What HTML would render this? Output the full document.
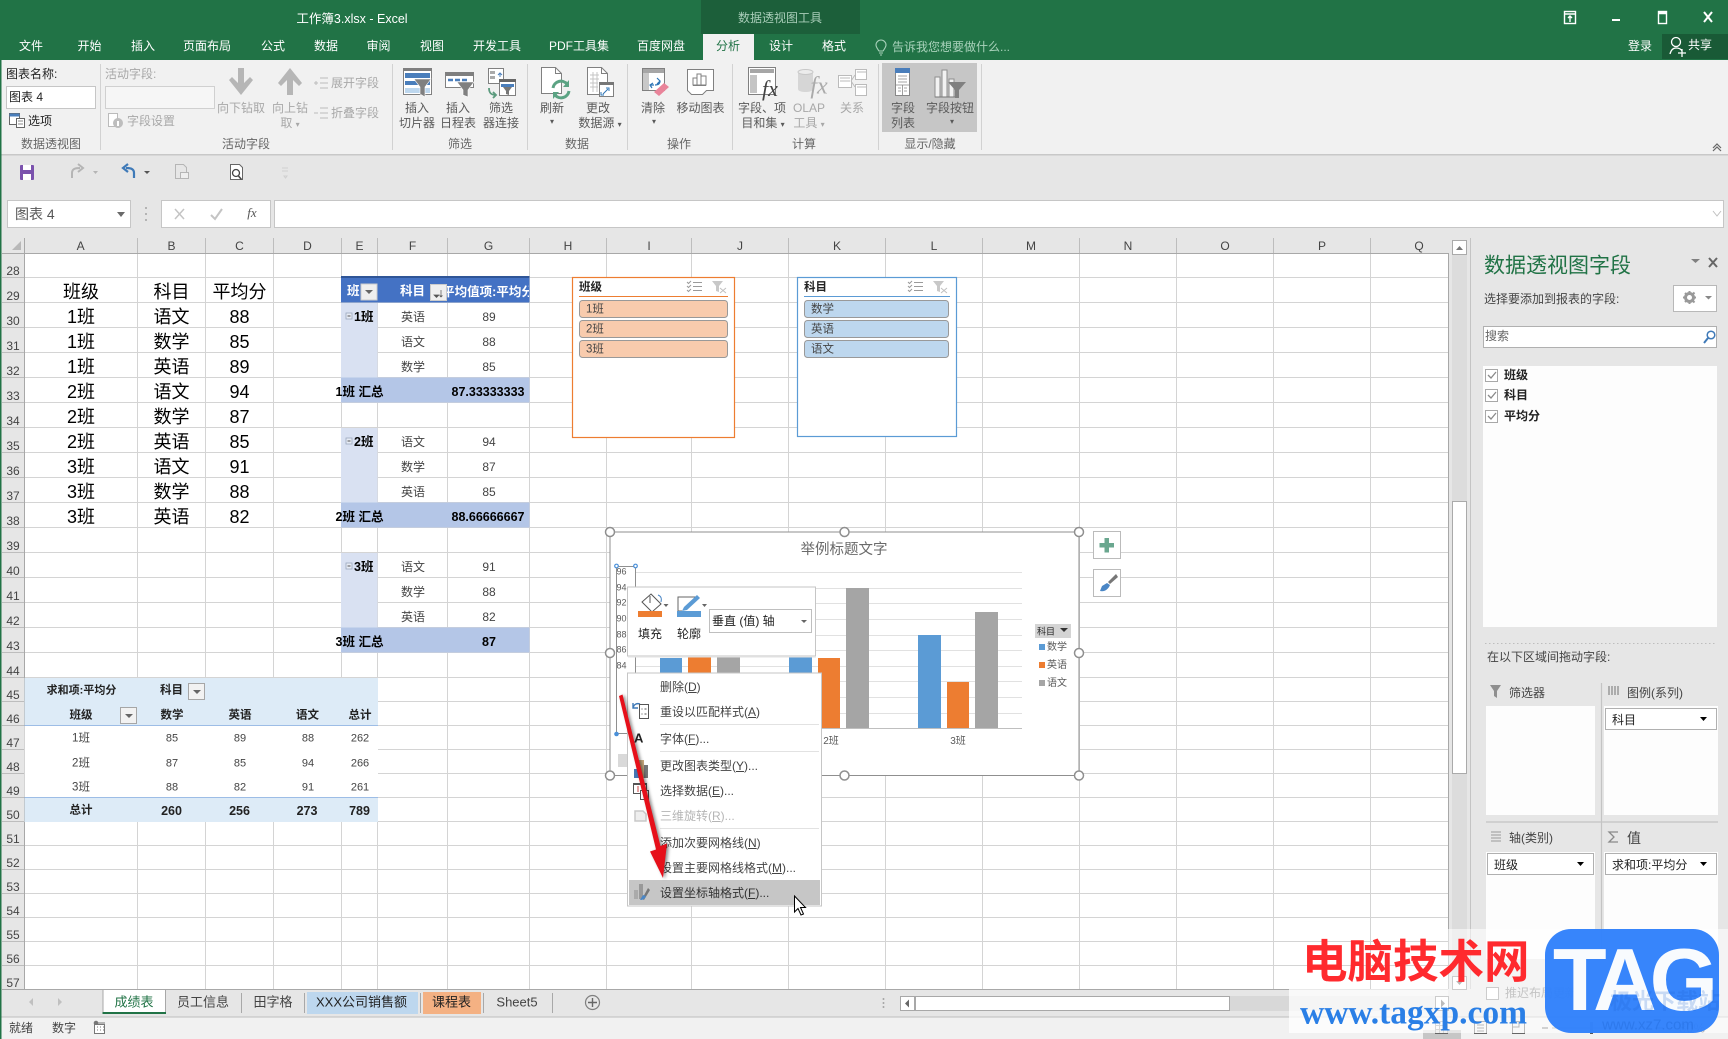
<!DOCTYPE html>
<html lang="zh-CN">
<head>
<meta charset="utf-8">
<title>工作簿3.xlsx - Excel</title>
<style>
html,body{margin:0;padding:0;width:1728px;height:1039px;overflow:hidden;background:#e6e6e6}
body{position:relative;font-family:"Liberation Sans","Noto Sans CJK SC",sans-serif;font-size:12px;color:#444}
svg.o{position:absolute;left:0;top:0;width:1728px;height:1039px;display:block}
.c,.l,.r{position:absolute;white-space:nowrap;line-height:1;font-weight:400}
.c{transform:translate(-50%,-50%)}
.l{transform:translateY(-50%)}
.r{transform:translate(-100%,-50%)}
.w{color:#fff}.g{color:#a8a8a8}.d{color:#5a5a5a}.k{color:#222}.b{font-weight:700}
.s9{font-size:9px}.s10{font-size:10px}.s11{font-size:11px}.s115{font-size:11.5px}.s125{font-size:12.5px}.s13{font-size:13px}.s14{font-size:14px}.s18{font-size:18px}.s21{font-size:21px}
.clip{position:absolute;overflow:hidden;display:flex;justify-content:center;align-items:center;white-space:nowrap}
u{text-decoration-thickness:1px;text-underline-offset:1px}
</style>
</head>
<body>
<svg class="o" viewBox="0 0 1728 1039" xmlns="http://www.w3.org/2000/svg">
<!-- title / ribbon -->
<rect width="1728" height="60" fill="#217346"/>
<rect x="701" width="159" height="34" fill="#1c5f3a"/>
<rect x="703" y="34" width="51" height="26" fill="#f1f1f1"/>
<rect x="1662" y="34" width="66" height="25" fill="#195a36"/>
<rect y="60" width="1728" height="94" fill="#f1f1f1"/>
<rect y="154" width="1728" height="1.5" fill="#c8c8c8"/>
<!-- window buttons -->
<g fill="none" stroke="#fff" stroke-width="1.4">
<rect x="1564.500" y="11.500" width="11" height="12"/><path d="M1565 14h11M1570 22v-6M1568 18l2-2 2 2"/>
<path d="M1612 20h8" stroke-width="2"/>
<rect x="1658.500" y="11.500" width="8" height="12"/><path d="M1658 13h9" stroke-width="2.500"/>
<path d="M1704 12l8 10M1712 12l-8 10" stroke-width="2"/>
<path d="M879 51c-2-3-3-4-3-6a5 5 0 0 1 10 0c0 2-1 3-3 6zM879 53h4M880 55h2" stroke="#a9d2bb" stroke-width="1.100"/>
<circle cx="1676" cy="42" r="4.500" stroke-width="1.300"/><path d="M1670 54c1-4 3-6 6-6s5 1 6 3M1678 53h8M1682 49v8" stroke-width="1.300"/>
</g>
<!-- ribbon separators -->
<path d="M100.500 64v86M392.500 64v86M527.500 64v86M627.500 64v86M732.500 64v86M878.500 64v86M981.500 64v86" stroke="#d2d2d2"/>
<!-- inputs -->
<rect x="6.500" y="86.500" width="89" height="22" fill="#fff" stroke="#c6c6c6"/>
<rect x="105.500" y="86.500" width="109" height="22" fill="#f6f6f6" stroke="#d0d0d0"/>
<!-- options icon -->
<rect x="9.500" y="113.500" width="10" height="11" fill="#fff" stroke="#666"/><rect x="9.500" y="113.500" width="10" height="3" fill="#4a7ebb"/>
<rect x="16.500" y="118.500" width="8" height="9" fill="#fff" stroke="#666"/><path d="M18 121h5M18 124h5" stroke="#888"/>
<!-- field settings -->
<rect x="108.500" y="113.500" width="9" height="13" fill="#fff" stroke="#bbb"/><circle cx="118" cy="123" r="5" fill="#bdbdbd"/><rect x="117" y="121" width="2" height="5" fill="#fff"/>
<!-- drill arrows -->
<path d="M238 68h6v15l6-6 3 3-12 15-12-15 3-3 6 6z" fill="#b6b6b6"/>
<path d="M287 95h6V80l6 6 3-3-12-15-12 15 3 3 6-6z" fill="#b6b6b6"/>
<g stroke="#bcbcbc" fill="none"><path d="M320 78h8M320 83h8M320 88h8M314 83h4M316 81v4"/><path d="M320 108h8M320 113h8M320 118h8M314 113h4"/></g>
<!-- slicer -->
<rect x="403.500" y="68.500" width="28" height="26" fill="#fff" stroke="#808080"/><rect x="403" y="68" width="29" height="3" fill="#7f7f7f"/><rect x="405" y="73" width="25" height="5" fill="#4a7ebb"/><rect x="405" y="81" width="25" height="4" fill="#4a7ebb"/><rect x="405" y="88" width="25" height="5" fill="#bdd7ee"/>
<path d="M414 79h17l-6 8v10l-5-3v-7z" fill="#808080" stroke="#fff" stroke-width=".6"/>
<!-- timeline -->
<rect x="445.500" y="72.500" width="28" height="15" fill="#fff" stroke="#808080"/><rect x="445" y="72" width="29" height="4" fill="#7f7f7f"/><path d="M448 80h5M455 80h5M462 80h5" stroke="#4a7ebb" stroke-width="2.500"/>
<path d="M457 82h17l-6 8v7l-5-2v-5z" fill="#808080" stroke="#fff" stroke-width=".6"/>
<!-- filter connections -->
<rect x="488.500" y="68.500" width="15" height="15" fill="#fff" stroke="#808080"/><rect x="490" y="71" width="5" height="3" fill="#aaa"/><rect x="490" y="76" width="5" height="3" fill="#aaa"/>
<path d="M500 77v-4M498 75l2-2 2 2" stroke="#4a7ebb" fill="none"/>
<rect x="499.500" y="79.500" width="16" height="16" fill="#fff" stroke="#808080"/><rect x="499" y="79" width="17" height="3" fill="#666"/><rect x="501" y="84" width="13" height="3" fill="#4a7ebb"/><path d="M503 87h9l-3 4v4l-3-1v-3z" fill="#777"/>
<path d="M489 88c0 5 2 7 7 7M493 92l3 3-3 3" fill="none" stroke="#5b9a7d" stroke-width="1.800"/>
<!-- refresh -->
<path d="M541.500 67.500h14l6 6v20h-20z" fill="#fff" stroke="#808080"/><path d="M555.500 67.500v6h6" fill="none" stroke="#808080"/>
<path d="M553 88a8 8 0 0 1 14-4M569 91a8 8 0 0 1-14 4" fill="none" stroke="#5ba383" stroke-width="3"/><path d="M569 80v7h-6zM553 99v-7h6z" fill="#5ba383"/>
<!-- change source -->
<path d="M587.500 67.500h14l6 6v21h-20z" fill="#fff" stroke="#808080"/><path d="M601.500 67.500v6h6" fill="none" stroke="#808080"/><path d="M590 75h9M590 79h9M590 83h8M590 87h8M593 72v20M597 72v20" stroke="#c4c4c4"/>
<rect x="599.500" y="82.500" width="14" height="14" fill="#fff" stroke="#808080"/><rect x="599" y="82" width="15" height="3" fill="#777"/><path d="M603 94l5-5M606 88h3v3M601 92v3h3" stroke="#2e75b6" fill="none"/>
<!-- clear -->
<rect x="642.500" y="68.500" width="22" height="22" fill="#fff" stroke="#808080"/><rect x="643" y="69" width="21" height="4" fill="#a6a6a6"/><rect x="643" y="73" width="6" height="17" fill="#c8c8c8"/>
<path d="M651 85h3M657 78l3 3-3 3M652 88l-2-3 3-2M660 81c0 3-2 4-5 4" fill="none" stroke="#2e75b6" stroke-width="1.200"/>
<path d="M654 92l10-9 5 4-10 9z" fill="#e9849a"/>
<!-- move chart -->
<path d="M687.500 69.500h26v21h-7l-4 4h-11l-4-4z" fill="#fff" stroke="#808080"/><path d="M693 85v-7h4v7zM697 85V74h4v11zM701 85v-9h5v9z" fill="#fff" stroke="#808080"/><path d="M693 85.500h13" stroke="#808080"/>
<!-- field items -->
<rect x="748.500" y="67.500" width="27" height="27" fill="#fff" stroke="#808080"/><rect x="750" y="69" width="24" height="4" fill="#a6a6a6"/><rect x="750" y="75" width="7" height="18" fill="#c4c4c4"/>
<!-- olap -->
<path d="M798 72c0-4 15-4 15 0v17c0 4-15 4-15 0z" fill="#d6d6d6"/><ellipse cx="805.500" cy="72" rx="7.500" ry="2.500" fill="#ececec" stroke="#c8c8c8"/>
<!-- relationships -->
<rect x="838.500" y="75.500" width="13" height="12" fill="#fff" stroke="#bbb"/><rect x="855.500" y="69.500" width="11" height="10" fill="#fff" stroke="#bbb"/><rect x="855.500" y="84.500" width="11" height="11" fill="#fff" stroke="#bbb"/><path d="M840 78h10M840 81h10M857 72h9M857 87h9M851 81l4-6M851 81l4 6" stroke="#bbb" fill="none"/>
<!-- active -->
<rect x="882" y="63" width="95" height="69" fill="#c6c6c6"/>
<rect x="895.500" y="68.500" width="14" height="27" fill="#fff" stroke="#888"/><rect x="895" y="68" width="15" height="5" fill="#4a7ebb"/><path d="M898 76h9M898 79h9M898 82h9M895 85h15M902.500 85v10M898 88h3M898 91h3M904 88h3M904 91h3" stroke="#888" stroke-width=".8" fill="none"/>
<path d="M935 97V77h5v20zM942 97V70h5v27zM949 97V79h5v18z" fill="#f2f2f2" stroke="#8f8f8f"/><path d="M935 97h22" stroke="#777"/>
<path d="M948 82h18l-7 8v8h-4v-8z" fill="#808080"/>
<path d="M1713 148l4-4 4 4M1713 151l4-4 4 4" stroke="#666" fill="none" stroke-width="1.200"/>
<!-- QAT -->
<rect x="20" y="165" width="14" height="15" rx="1" fill="#7b52ad"/><rect x="23" y="165" width="8" height="5" fill="#fff"/><rect x="23" y="174" width="8" height="6" fill="#fff"/>
<path d="M72 178v-5c0-4 3-5 8-5M78 164l5 4-5 4" fill="none" stroke="#b5b5b5" stroke-width="2"/><path d="M93 171h5l-2.500 3z" fill="#b5b5b5"/>
<path d="M134 178v-5c0-4-3-5-8-5M128 164l-5 4 5 4" fill="none" stroke="#3f7ab8" stroke-width="2.200"/><path d="M144 171h6l-3 3z" fill="#555"/>
<path d="M175.500 164.500h8l3 3v11h-11z" fill="none" stroke="#b5b5b5"/><rect x="180.500" y="172.500" width="8" height="6" fill="#eee" stroke="#b5b5b5"/>
<path d="M230.500 164.500h9l3 3v12h-12z" fill="#fff" stroke="#666"/><circle cx="236" cy="173" r="3.500" fill="none" stroke="#444" stroke-width="1.300"/><path d="M238.500 176l3 3.500" stroke="#444" stroke-width="1.500"/>
<path d="M282 168h6M282 171h6M284 176h3l-1.500 2z" stroke="#d0d0d0" fill="none"/>
<!-- formula bar -->
<rect x="7.500" y="200.500" width="123" height="27" fill="#fff" stroke="#c6c6c6"/>
<rect x="161.500" y="200.500" width="109" height="27" fill="#fff" stroke="#c6c6c6"/>
<rect x="274.500" y="200.500" width="1449" height="27" fill="#fff" stroke="#c6c6c6"/>
<path d="M117 212h8l-4 5z" fill="#6a6a6a"/>
<path d="M146 207v2M146 213v2M146 219v2" stroke="#a8a8a8" stroke-width="1.600"/>
<path d="M175 209l9 10M184 209l-9 10" stroke="#c4c4c4" stroke-width="1.500"/>
<path d="M211 215l4 4 7-10" stroke="#c4c4c4" stroke-width="2" fill="none"/>
<path d="M1713 211l4 5 4-5" stroke="#c0c0c0" fill="none"/>
<!-- grid -->
<rect x="24" y="253" width="1424" height="736" fill="#fff"/>
<rect x="2" y="238" width="1446" height="15" fill="#e6e6e6"/>
<rect x="2" y="253" width="22" height="736" fill="#e6e6e6"/>
<g stroke="#d4d4d4" stroke-width="1">
<path d="M137.500 253v736M205.500 253v736M273.500 253v736M341.500 253v736M377.500 253v736M447.500 253v736M529.500 253v736M606.500 253v736M691.500 253v736M788.500 253v736M885.500 253v736M982.500 253v736M1079.500 253v736M1176.500 253v736M1273.500 253v736M1370.500 253v736"/>
<path d="M24 277.500h1424M24 302.500h1424M24 327.500h1424M24 352.500h1424M24 377.500h1424M24 402.500h1424M24 427.500h1424M24 452.500h1424M24 477.500h1424M24 502.500h1424M24 527.500h1424M24 552.500h1424M24 577.500h1424M24 602.500h1424M24 627.500h1424M24 652.500h1424M24 677.500h1424M24 701.500h1424M24 725.500h1424M24 749.500h1424M24 773.500h1424M24 797.500h1424M24 821.500h1424M24 845.500h1424M24 869.500h1424M24 893.500h1424M24 917.500h1424M24 941.500h1424M24 965.500h1424"/>
</g>
<g stroke="#bdbdbd" stroke-width="1">
<path d="M2 277.500h22M2 302.500h22M2 327.500h22M2 352.500h22M2 377.500h22M2 402.500h22M2 427.500h22M2 452.500h22M2 477.500h22M2 502.500h22M2 527.500h22M2 552.500h22M2 577.500h22M2 602.500h22M2 627.500h22M2 652.500h22M2 677.500h22M2 701.500h22M2 725.500h22M2 749.500h22M2 773.500h22M2 797.500h22M2 821.500h22M2 845.500h22M2 869.500h22M2 893.500h22M2 917.500h22M2 941.500h22M2 965.500h22"/>
<path d="M24.500 238v15M137.500 238v15M205.500 238v15M273.500 238v15M341.500 238v15M377.500 238v15M447.500 238v15M529.500 238v15M606.500 238v15M691.500 238v15M788.500 238v15M885.500 238v15M982.500 238v15M1079.500 238v15M1176.500 238v15M1273.500 238v15M1370.500 238v15"/>
</g>
<path d="M2 253.500h1446M24.500 238v751" stroke="#a8a8a8"/>
<path d="M21 241v9h-9z" fill="#b8b8b8"/>
<!-- pivot 1 -->
<rect x="341" y="276" width="188.500" height="26.500" fill="#4472c4"/><rect x="341" y="276" width="188.500" height="2" fill="#2f5597"/>
<rect x="361" y="284" width="16" height="16" fill="#efefef" stroke="#ccc"/><path d="M365 290h8l-4 4z" fill="#666"/>
<rect x="430.500" y="284.500" width="16" height="16" fill="#efefef" stroke="#ccc"/><path d="M434 295h5l-2.500 2.500zM441 290v7M439.500 295.500l1.500 1.500 1.500-1.500" fill="#555" stroke="#555" stroke-width=".7"/>
<rect x="341" y="303" width="36.500" height="74.500" fill="#d9e1f2"/>
<rect x="341" y="377.500" width="188.500" height="25" fill="#b4c6e7"/>
<rect x="341" y="428" width="36.500" height="74.500" fill="#d9e1f2"/>
<rect x="341" y="502.500" width="188.500" height="25" fill="#b4c6e7"/>
<rect x="341" y="553" width="36.500" height="74.500" fill="#d9e1f2"/>
<rect x="341" y="627.500" width="188.500" height="25" fill="#b4c6e7"/>
<g fill="#e6ebf5" stroke="#9aa7bd" stroke-width=".8"><rect x="346" y="313" width="6" height="6"/><rect x="346" y="438" width="6" height="6"/><rect x="346" y="563" width="6" height="6"/></g>
<path d="M347.500 316h3M347.500 441h3M347.500 566h3" stroke="#555"/>
<!-- pivot 2 -->
<rect x="24.500" y="678" width="353.500" height="48" fill="#ddebf7"/>
<rect x="24.500" y="726" width="353.500" height="71" fill="#fff"/>
<rect x="24.500" y="797.500" width="353.500" height="24.500" fill="#ddebf7"/>
<path d="M24.500 725.500H378M24.500 797.500H378" stroke="#9dbde6"/>
<rect x="188.500" y="683.500" width="16" height="16" fill="#f2f2f2" stroke="#a6a6a6"/><path d="M193 690h8l-4 4z" fill="#666"/>
<rect x="120.500" y="707.500" width="16" height="16" fill="#f2f2f2" stroke="#a6a6a6"/><path d="M125 714h8l-4 4z" fill="#666"/>
<!-- slicers -->
<rect x="572.500" y="277.500" width="162" height="160" fill="#fff" stroke="#ed7d31" stroke-width="1.200"/>
<path d="M579 296.500h149" stroke="#ed7d31"/>
<g fill="#f8cbad" stroke="#999"><rect x="579.500" y="300.500" width="148" height="17" rx="3"/><rect x="579.500" y="320.500" width="148" height="17" rx="3"/><rect x="579.500" y="340.500" width="148" height="17" rx="3"/></g>
<rect x="797.500" y="277.500" width="159" height="159" fill="#fff" stroke="#5b9bd5" stroke-width="1.200"/>
<path d="M804 296.500h146" stroke="#5b9bd5"/>
<g fill="#bdd7ee" stroke="#999"><rect x="804.500" y="300.500" width="144" height="17" rx="3"/><rect x="804.500" y="320.500" width="144" height="17" rx="3"/><rect x="804.500" y="340.500" width="144" height="17" rx="3"/></g>
<g stroke="#9a9a9a" fill="none"><path d="M693 282.500h9M693 286.500h9M693 290.500h9M687 282l1.500 1.500L691 281M687 286l1.500 1.500L691 285M687 290l1.500 1.500L691 289"/><path d="M914 282.500h9M914 286.500h9M914 290.500h9M908 282l1.500 1.500L912 281M908 286l1.500 1.500L912 285M908 290l1.500 1.500L912 289"/></g>
<path d="M712 281h11l-4 5v6l-3-1v-5z" fill="#c8c8c8"/><path d="M720 288l6 5M726 288l-6 5" stroke="#c0c0c0"/>
<path d="M933 281h11l-4 5v6l-3-1v-5z" fill="#c8c8c8"/><path d="M941 288l6 5M947 288l-6 5" stroke="#c0c0c0"/>
<!-- chart -->
<rect x="610" y="532" width="469" height="243.500" fill="#fff" stroke="#8f8f8f"/>
<g stroke="#e1e1e1"><path d="M636 572.500h386M636 588.500h386M636 603.500h386M636 619.500h386M636 635.500h386M636 650.500h386M636 666.500h386M636 681.500h386M636 697.500h386M636 713.500h386"/></g>
<path d="M636 728.500h386" stroke="#bfbfbf"/>
<g fill="#5b9bd5"><rect x="660" y="658" width="22" height="70"/><rect x="789" y="642" width="23" height="86"/><rect x="918" y="635" width="23" height="93"/></g>
<g fill="#ed7d31"><rect x="688" y="627" width="23" height="101"/><rect x="818" y="658" width="22" height="70"/><rect x="947" y="682" width="22" height="46"/></g>
<g fill="#a5a5a5"><rect x="717" y="635" width="23" height="93"/><rect x="846" y="588" width="23" height="140"/><rect x="975" y="612" width="23" height="116"/></g>
<rect x="616.500" y="566.500" width="19" height="167" fill="none" stroke="#8f8f8f"/>
<g fill="#fff" stroke="#4a90d9" stroke-width="1.200"><circle cx="616.500" cy="566" r="1.800"/><circle cx="635.500" cy="566" r="1.800"/></g>
<circle cx="616.500" cy="734" r="2.300" fill="#4a90d9"/>
<rect x="618" y="754" width="22" height="13" fill="#d9d9d9"/>
<rect x="1035" y="624" width="36" height="14" fill="#d4d4d4"/>
<path d="M1060 628h8l-4 4z" fill="#333"/>
<rect x="1039" y="644" width="6" height="6" fill="#5b9bd5"/><rect x="1039" y="662" width="6" height="6" fill="#ed7d31"/><rect x="1039" y="680" width="6" height="6" fill="#a5a5a5"/>
<g fill="#fff" stroke="#8f8f8f" stroke-width="1.500"><circle cx="610" cy="532" r="4.500"/><circle cx="844.500" cy="532" r="4.500"/><circle cx="1079" cy="532" r="4.500"/><circle cx="610" cy="653" r="4.500"/><circle cx="1079" cy="653" r="4.500"/><circle cx="610" cy="775.500" r="4.500"/><circle cx="844.500" cy="775.500" r="4.500"/><circle cx="1079" cy="775.500" r="4.500"/></g>
<!-- chart buttons -->
<rect x="1093.500" y="531.500" width="27" height="27" fill="#fff" stroke="#bbb"/><path d="M1104.500 538h4.500v5h5v4.500h-5v5h-4.500v-5h-5v-4.500h5z" fill="#6aa78f"/>
<rect x="1093.500" y="569.500" width="27" height="27" fill="#fff" stroke="#bbb"/><path d="M1116 574l-8 8 2 2 8-7z" fill="#777"/><path d="M1100 591c4 1 8-1 10-6l-3-2-5 3z" fill="#4a86c5"/>
<!-- mini toolbar -->
<rect x="627.500" y="587" width="188" height="69" fill="#fff" stroke="#c6c6c6"/>
<rect x="628" y="656" width="188" height="1.500" fill="#e0e0e0"/>
<path d="M651 594l10 10-9 8-10-10z" fill="#fff" stroke="#555"/><path d="M650 596v7" stroke="#555"/><path d="M658 595c3 1 4 3 3 7" stroke="#4a86c5" fill="none"/>
<rect x="638" y="611" width="24" height="6" fill="#ed7d31"/><path d="M663.500 604h5l-2.500 3z" fill="#666"/>
<path d="M697 597h-19v14h4" fill="none" stroke="#666"/><path d="M684 607l13-12 3 3-13 12-5 1z" fill="#5b9bd5"/>
<rect x="677" y="611" width="24" height="6" fill="#5b9bd5"/><path d="M702 604h5l-2.500 3z" fill="#666"/>
<rect x="709.500" y="609.500" width="102" height="23" fill="#fff" stroke="#bfbfbf"/><path d="M801 620h6l-3 3z" fill="#666"/>
<!-- context menu -->
<rect x="627.500" y="673" width="194" height="233" fill="#fff" stroke="#c6c6c6"/>
<rect x="629" y="880" width="191" height="25" fill="#c6c6c6"/>
<path d="M660 724.500h159M660 751.500h159M660 828.500h159" stroke="#e2e2e2"/>
<path d="M640 704c-3-1-6 0-7 4M633 703v5h5" fill="none" stroke="#3f7ab8" stroke-width="1.400"/><rect x="639.500" y="704.500" width="9" height="14" fill="#fff" stroke="#555"/><path d="M641.500 709h1M644.500 709h2M641.500 714h1M644.500 714h2" stroke="#555"/>
<path d="M634 769h5v9h-5z" fill="#4676b4"/><path d="M639 760h5v18h-5z" fill="#c8a97e"/><path d="M644 765h4v13h-4z" fill="#777"/>
<rect x="633.500" y="783.500" width="13" height="10" fill="#fff" stroke="#555"/><rect x="633" y="783" width="14" height="2" fill="#555"/><rect x="640.500" y="790.500" width="8" height="9" fill="#fff" stroke="#555"/><path d="M638 786v6" stroke="#c44"/>
<path d="M635 811h8l3 3v7h-11z" fill="#eee" stroke="#c8c8c8" stroke-width="1.500"/>
<rect x="634" y="890" width="4" height="9" fill="#aaa"/><rect x="639" y="884" width="4" height="15" fill="#999"/><path d="M642 899l6-11 2 2-6 10z" fill="#777"/><path d="M640 900c3 0 5-1 6-4l-3-1z" fill="#4a86c5"/>
<!-- vertical scrollbar -->
<rect x="1448" y="238" width="22" height="751" fill="#e6e6e6"/>
<rect x="1448" y="253" width="1" height="736" fill="#a8a8a8"/>
<rect x="1452" y="240" width="15" height="749" fill="#dcdcdc"/>
<rect x="1452.500" y="240.500" width="14" height="14" fill="#fff" stroke="#aaa"/><path d="M1456 250l3.500-4 3.500 4z" fill="#777"/>
<rect x="1452.500" y="501.500" width="14" height="272" fill="#fff" stroke="#aaa"/>
<rect x="1470" y="238" width="1" height="780" fill="#c4c4c4"/>
<!-- pane -->
<path d="M1691 259h9l-4.500 4z" fill="#808080"/><path d="M1709 258l8 9M1717 258l-8 9" stroke="#666" stroke-width="2"/>
<rect x="1673.500" y="285.500" width="43" height="26" fill="#fff" stroke="#b8b8b8"/><circle cx="1689.500" cy="297.500" r="4" fill="none" stroke="#999" stroke-width="3"/><path d="M1689.500 291v2M1689.500 302v2M1683 297.500h2M1694 297.500h2M1685 293l1.500 1.500M1693 301l1.500 1.500M1685 302l1.500-1.500M1693 294l1.500-1.500" stroke="#999" stroke-width="2"/><path d="M1705 296h7l-3.500 3.500z" fill="#888"/>
<rect x="1483.500" y="326.500" width="233" height="21" fill="#fff" stroke="#b0b0b0"/>
<circle cx="1711" cy="335" r="3.800" fill="none" stroke="#3f7ab8" stroke-width="1.500"/><path d="M1708 338l-4 5" stroke="#3f7ab8" stroke-width="2"/>
<rect x="1483" y="366" width="234" height="261" fill="#fdfdfd"/>
<g fill="#fff" stroke="#a8a8a8"><rect x="1485.500" y="369.500" width="12" height="12"/><rect x="1485.500" y="389.500" width="12" height="12"/><rect x="1485.500" y="410.500" width="12" height="12"/></g>
<g stroke="#8a8a8a" fill="none" stroke-width="1.300"><path d="M1488 375l3 3 5-6M1488 395l3 3 5-6M1488 416l3 3 5-6"/></g>
<path d="M1485 643.500h232" stroke="#bdbdbd" stroke-dasharray="1.500 2.500"/>
<rect x="1486" y="706" width="109" height="109" fill="#fdfdfd"/>
<rect x="1604" y="706" width="114" height="109" fill="#fdfdfd"/>
<rect x="1486" y="852" width="109" height="107" fill="#fdfdfd"/>
<rect x="1604" y="852" width="114" height="107" fill="#fdfdfd"/>
<path d="M1601.500 683v276M1486 822h232" stroke="#c4c4c4" stroke-width="1.200"/>
<path d="M1490 685h11l-4 6v7l-3-2v-5z" fill="#8f8f8f"/>
<path d="M1609 686v9M1612 686v9M1615 686v9M1618 686v9" stroke="#999" stroke-width="1.500"/>
<path d="M1491 832h10M1491 835h10M1491 838h10M1491 841h10" stroke="#999"/>
<path d="M1618 832h-9l5 5-5 5h9" fill="none" stroke="#8a8a8a" stroke-width="1.300"/>
<g fill="#fff" stroke="#b0b0b0"><rect x="1605.500" y="708.500" width="111" height="21"/><rect x="1487.500" y="853.500" width="106" height="21"/><rect x="1605.500" y="853.500" width="111" height="21"/></g>
<path d="M1700 717h7l-3.500 4zM1577 862h7l-3.500 4zM1700 862h7l-3.500 4z" fill="#000"/>
<!-- tabs -->
<rect x="0" y="989" width="1728" height="28" fill="#e6e6e6"/>
<rect x="2" y="989" width="1446" height="1" fill="#a8a8a8"/>
<rect x="102.500" y="990" width="63" height="24" fill="#fff"/>
<rect x="102.500" y="989" width="1" height="24" fill="#a8a8a8"/><rect x="165" y="989" width="1" height="24" fill="#a8a8a8"/>
<rect x="102.500" y="1012" width="63.500" height="2" fill="#217346"/>
<rect x="307" y="992" width="111" height="22" fill="#bdd7ee"/>
<rect x="423" y="992" width="58" height="22" fill="#f4b183"/>
<path d="M241.500 993v20M304.500 993v20M420.500 993v20M483.500 993v20M552.500 993v20" stroke="#a8a8a8"/>
<path d="M33 998l-4 4 4 4zM58 998l4 4-4 4z" fill="#c0c0c0"/>
<circle cx="592.500" cy="1002.500" r="7" fill="none" stroke="#808080" stroke-width="1.200"/><path d="M588 1002.500h9M592.500 998v9" stroke="#666" stroke-width="1.400"/>
<path d="M883.500 998v2M883.500 1002v2M883.500 1006v2" stroke="#a8a8a8" stroke-width="1.600"/>
<rect x="900.500" y="996.500" width="14" height="14" fill="#fff" stroke="#a8a8a8"/><path d="M909 999.500l-4 4 4 4z" fill="#666"/>
<rect x="915.500" y="996.500" width="314" height="14" fill="#fff" stroke="#a8a8a8"/>
<rect x="1230" y="996" width="205" height="15" fill="#d8d8d8"/>
<!-- status -->
<rect x="0" y="1017" width="1728" height="22" fill="#f1f1f1"/>
<rect x="0" y="1016.500" width="1728" height="1" fill="#bdbdbd"/>
<rect x="0" y="0" width="1.500" height="1039" fill="#217346"/>
<circle cx="96" cy="1023" r="2.300" fill="#777"/><rect x="94.500" y="1024.500" width="10" height="9" fill="#fff" stroke="#777"/><path d="M95 1023h10M97 1027h1M100 1027h1M97 1030h1M100 1030h1M103 1027h1M103 1030h1" stroke="#777"/>
<rect x="1423" y="1030" width="38" height="9" fill="#c6c6c6"/>
<g fill="none" stroke="#666"><rect x="1435.500" y="1021.500" width="12" height="12"/><path d="M1435 1025.500h13M1435 1029.500h13M1439.500 1021v12M1443.500 1021v12"/><rect x="1474.500" y="1021.500" width="12" height="12"/><path d="M1477 1025h7M1477 1028h7M1477 1031h7"/><rect x="1512.500" y="1021.500" width="12" height="12"/><path d="M1519 1021v6h-6"/></g>
<path d="M1542 1028h6M1655 1028h8M1659 1024v8" stroke="#666" stroke-width="1.200"/><path d="M1552 1028h98" stroke="#999"/><rect x="1590" y="1022" width="3" height="12" fill="#555"/>
</svg>

<!-- title text -->
<span class="c w" style="left:352px;top:19px;font-size:12.500px">工作簿3.xlsx - Excel</span>
<span class="c" style="left:780px;top:18px;color:#a9cdb9">数据透视图工具</span>
<span class="c w" style="left:31px;top:46px">文件</span>
<span class="c w" style="left:89.500px;top:46px">开始</span>
<span class="c w" style="left:143px;top:46px">插入</span>
<span class="c w" style="left:207px;top:46px">页面布局</span>
<span class="c w" style="left:273px;top:46px">公式</span>
<span class="c w" style="left:326px;top:46px">数据</span>
<span class="c w" style="left:378.500px;top:46px">审阅</span>
<span class="c w" style="left:432px;top:46px">视图</span>
<span class="c w" style="left:497px;top:46px">开发工具</span>
<span class="c w" style="left:579px;top:46px">PDF工具集</span>
<span class="c w" style="left:661px;top:46px">百度网盘</span>
<span class="c" style="left:728px;top:46px;color:#217346">分析</span>
<span class="c w" style="left:781px;top:46px">设计</span>
<span class="c w" style="left:834px;top:46px">格式</span>
<span class="l" style="left:892px;top:47px;color:#a9d2bb">告诉我您想要做什么...</span>
<span class="c w" style="left:1640px;top:46px">登录</span>
<span class="l w" style="left:1688px;top:45px">共享</span>

<!-- ribbon text -->
<span class="l k" style="left:6px;top:74px">图表名称:</span>
<span class="l k" style="left:9px;top:97px">图表 4</span>
<span class="l k" style="left:28px;top:121px">选项</span>
<span class="c" style="left:51px;top:144px;color:#666">数据透视图</span>
<span class="l g" style="left:105px;top:74px">活动字段:</span>
<span class="l g" style="left:127px;top:121px">字段设置</span>
<span class="c g" style="left:241px;top:108px">向下钻取</span>
<span class="c g" style="left:290px;top:108px">向上钻</span>
<span class="c g" style="left:290px;top:123px">取 <span style="font-size:8px">▾</span></span>
<span class="l g" style="left:331px;top:83px">展开字段</span>
<span class="l g" style="left:331px;top:113px">折叠字段</span>
<span class="c" style="left:246px;top:144px;color:#666">活动字段</span>
<span class="c d" style="left:417px;top:108px">插入</span><span class="c d" style="left:417px;top:123px">切片器</span>
<span class="c d" style="left:458px;top:108px">插入</span><span class="c d" style="left:458px;top:123px">日程表</span>
<span class="c d" style="left:501px;top:108px">筛选</span><span class="c d" style="left:501px;top:123px">器连接</span>
<span class="c" style="left:460px;top:144px;color:#666">筛选</span>
<span class="c d" style="left:552px;top:108px">刷新</span><span class="c d" style="left:552px;top:122px;font-size:8px">▾</span>
<span class="c d" style="left:598px;top:108px">更改</span><span class="c d" style="left:600px;top:123px">数据源 <span style="font-size:8px">▾</span></span>
<span class="c" style="left:577px;top:144px;color:#666">数据</span>
<span class="c d" style="left:653px;top:108px">清除</span><span class="c d" style="left:654px;top:122px;font-size:8px">▾</span>
<span class="c d" style="left:700.500px;top:108px">移动图表</span>
<span class="c" style="left:679px;top:144px;color:#666">操作</span>
<span class="c d" style="left:762px;top:108px">字段、项</span><span class="c d" style="left:763px;top:123px">目和集 <span style="font-size:8px">▾</span></span>
<span class="c g" style="left:809px;top:108px">OLAP</span><span class="c g" style="left:809px;top:123px">工具 <span style="font-size:8px">▾</span></span>
<span class="c g" style="left:852px;top:108px">关系</span>
<span class="c" style="left:804px;top:144px;color:#666">计算</span>
<span class="c d" style="left:903px;top:108px">字段</span><span class="c d" style="left:903px;top:123px">列表</span>
<span class="c d" style="left:950px;top:108px">字段按钮</span><span class="c d" style="left:952px;top:122px;font-size:8px">▾</span>
<span class="c" style="left:930px;top:144px;color:#666">显示/隐藏</span>
<span class="c" style="left:770px;top:89px;font:italic 22px 'Liberation Serif',serif;color:#444">fx</span>
<span class="c" style="left:819px;top:87px;font:italic 24px 'Liberation Serif',serif;color:#aaa">fx</span>
<!-- formula bar -->
<span class="l s14" style="left:15px;top:214px;color:#555">图表 4</span>
<span class="c" style="left:252px;top:213px;font:italic 13px 'Liberation Serif',serif;color:#555">fx</span>

<!-- col headers -->
<span class="c" style="left:80.700px;top:246px">A</span><span class="c" style="left:171.500px;top:246px">B</span><span class="c" style="left:239.500px;top:246px">C</span><span class="c" style="left:307.500px;top:246px">D</span><span class="c" style="left:359.500px;top:246px">E</span><span class="c" style="left:412.500px;top:246px">F</span><span class="c" style="left:488.500px;top:246px">G</span><span class="c" style="left:568px;top:246px">H</span><span class="c" style="left:649px;top:246px">I</span><span class="c" style="left:740px;top:246px">J</span><span class="c" style="left:837px;top:246px">K</span><span class="c" style="left:934px;top:246px">L</span><span class="c" style="left:1031px;top:246px">M</span><span class="c" style="left:1128px;top:246px">N</span><span class="c" style="left:1225px;top:246px">O</span><span class="c" style="left:1322px;top:246px">P</span><span class="c" style="left:1419px;top:246px">Q</span>
<!-- row headers -->
<span class="c" style="left:13px;top:271px">28</span><span class="c" style="left:13px;top:296px">29</span><span class="c" style="left:13px;top:321px">30</span><span class="c" style="left:13px;top:346px">31</span><span class="c" style="left:13px;top:371px">32</span><span class="c" style="left:13px;top:396px">33</span><span class="c" style="left:13px;top:421px">34</span><span class="c" style="left:13px;top:446px">35</span><span class="c" style="left:13px;top:471px">36</span><span class="c" style="left:13px;top:496px">37</span><span class="c" style="left:13px;top:521px">38</span><span class="c" style="left:13px;top:546px">39</span><span class="c" style="left:13px;top:571px">40</span><span class="c" style="left:13px;top:596px">41</span><span class="c" style="left:13px;top:621px">42</span><span class="c" style="left:13px;top:646px">43</span><span class="c" style="left:13px;top:671px">44</span><span class="c" style="left:13px;top:695px">45</span><span class="c" style="left:13px;top:719px">46</span><span class="c" style="left:13px;top:743px">47</span><span class="c" style="left:13px;top:767px">48</span><span class="c" style="left:13px;top:791px">49</span><span class="c" style="left:13px;top:815px">50</span><span class="c" style="left:13px;top:839px">51</span><span class="c" style="left:13px;top:863px">52</span><span class="c" style="left:13px;top:887px">53</span><span class="c" style="left:13px;top:911px">54</span><span class="c" style="left:13px;top:935px">55</span><span class="c" style="left:13px;top:959px">56</span><span class="c" style="left:13px;top:983px">57</span>

<!-- source table -->
<span class="c s18" style="left:81px;top:292px;color:#000">班级</span><span class="c s18" style="left:171.500px;top:292px;color:#000">科目</span><span class="c s18" style="left:239.500px;top:292px;color:#000">平均分</span>
<span class="c s18" style="left:81px;top:317px;color:#000">1班</span><span class="c s18" style="left:171.500px;top:317px;color:#000">语文</span><span class="c s18" style="left:239.500px;top:317px;color:#000">88</span>
<span class="c s18" style="left:81px;top:342px;color:#000">1班</span><span class="c s18" style="left:171.500px;top:342px;color:#000">数学</span><span class="c s18" style="left:239.500px;top:342px;color:#000">85</span>
<span class="c s18" style="left:81px;top:367px;color:#000">1班</span><span class="c s18" style="left:171.500px;top:367px;color:#000">英语</span><span class="c s18" style="left:239.500px;top:367px;color:#000">89</span>
<span class="c s18" style="left:81px;top:392px;color:#000">2班</span><span class="c s18" style="left:171.500px;top:392px;color:#000">语文</span><span class="c s18" style="left:239.500px;top:392px;color:#000">94</span>
<span class="c s18" style="left:81px;top:417px;color:#000">2班</span><span class="c s18" style="left:171.500px;top:417px;color:#000">数学</span><span class="c s18" style="left:239.500px;top:417px;color:#000">87</span>
<span class="c s18" style="left:81px;top:442px;color:#000">2班</span><span class="c s18" style="left:171.500px;top:442px;color:#000">英语</span><span class="c s18" style="left:239.500px;top:442px;color:#000">85</span>
<span class="c s18" style="left:81px;top:467px;color:#000">3班</span><span class="c s18" style="left:171.500px;top:467px;color:#000">语文</span><span class="c s18" style="left:239.500px;top:467px;color:#000">91</span>
<span class="c s18" style="left:81px;top:492px;color:#000">3班</span><span class="c s18" style="left:171.500px;top:492px;color:#000">数学</span><span class="c s18" style="left:239.500px;top:492px;color:#000">88</span>
<span class="c s18" style="left:81px;top:517px;color:#000">3班</span><span class="c s18" style="left:171.500px;top:517px;color:#000">英语</span><span class="c s18" style="left:239.500px;top:517px;color:#000">82</span>

<!-- pivot 1 text -->
<span class="l w s125 b" style="left:347px;top:291px">班</span>
<span class="c w s125 b" style="left:412.500px;top:291px">科目</span>
<div class="clip w b" style="left:447px;top:278px;width:82px;height:24px;font-size:12.500px">平均值项:平均分</div>
<span class="l s125 b" style="left:354px;top:317px;color:#000">1班</span><span class="l s125 b" style="left:354px;top:442px;color:#000">2班</span><span class="l s125 b" style="left:354px;top:567px;color:#000">3班</span>
<span class="c" style="left:413px;top:317px">英语</span><span class="c" style="left:489px;top:317px">89</span>
<span class="c" style="left:413px;top:342px">语文</span><span class="c" style="left:489px;top:342px">88</span>
<span class="c" style="left:413px;top:367px">数学</span><span class="c" style="left:489px;top:367px">85</span>
<span class="c s125 b" style="left:359.500px;top:391.500px;color:#000">1班 汇总</span><span class="c s125 b" style="left:488px;top:391.500px;color:#000">87.33333333</span>
<span class="c" style="left:413px;top:442px">语文</span><span class="c" style="left:489px;top:442px">94</span>
<span class="c" style="left:413px;top:467px">数学</span><span class="c" style="left:489px;top:467px">87</span>
<span class="c" style="left:413px;top:492px">英语</span><span class="c" style="left:489px;top:492px">85</span>
<span class="c s125 b" style="left:359.500px;top:516.500px;color:#000">2班 汇总</span><span class="c s125 b" style="left:488px;top:516.500px;color:#000">88.66666667</span>
<span class="c" style="left:413px;top:567px">语文</span><span class="c" style="left:489px;top:567px">91</span>
<span class="c" style="left:413px;top:592px">数学</span><span class="c" style="left:489px;top:592px">88</span>
<span class="c" style="left:413px;top:617px">英语</span><span class="c" style="left:489px;top:617px">82</span>
<span class="c s125 b" style="left:359.500px;top:641.500px;color:#000">3班 汇总</span><span class="c s125 b" style="left:489px;top:641.500px;color:#000">87</span>

<!-- pivot 2 text -->
<span class="c s11 b k" style="left:81.500px;top:691px">求和项:平均分</span>
<span class="c s115 b k" style="left:171.500px;top:691px">科目</span>
<span class="c s115 b k" style="left:81px;top:716px">班级</span><span class="c s115 b k" style="left:172px;top:716px">数学</span><span class="c s115 b k" style="left:240px;top:716px">英语</span><span class="c s115 b k" style="left:307.500px;top:716px">语文</span><span class="c s115 b k" style="left:360px;top:716px">总计</span>
<span class="c s115" style="left:81px;top:739px">1班</span><span class="c s11" style="left:172px;top:739px">85</span><span class="c s11" style="left:240px;top:739px">89</span><span class="c s11" style="left:308px;top:739px">88</span><span class="c s11" style="left:360px;top:739px">262</span>
<span class="c s115" style="left:81px;top:763.500px">2班</span><span class="c s11" style="left:172px;top:763.500px">87</span><span class="c s11" style="left:240px;top:763.500px">85</span><span class="c s11" style="left:308px;top:763.500px">94</span><span class="c s11" style="left:360px;top:763.500px">266</span>
<span class="c s115" style="left:81px;top:787.500px">3班</span><span class="c s11" style="left:172px;top:787.500px">88</span><span class="c s11" style="left:240px;top:787.500px">82</span><span class="c s11" style="left:308px;top:787.500px">91</span><span class="c s11" style="left:360px;top:787.500px">261</span>
<span class="c s115 b k" style="left:81px;top:811px">总计</span><span class="c s125 b k" style="left:171.500px;top:811px">260</span><span class="c s125 b k" style="left:239.500px;top:811px">256</span><span class="c s125 b k" style="left:307px;top:811px">273</span><span class="c s125 b k" style="left:359.500px;top:811px">789</span>

<!-- slicer text -->
<span class="l s115 b k" style="left:579px;top:287.500px">班级</span>
<span class="l s115" style="left:586px;top:310px">1班</span><span class="l s115" style="left:586px;top:330px">2班</span><span class="l s115" style="left:586px;top:350px">3班</span>
<span class="l s115 b k" style="left:804px;top:287.500px">科目</span>
<span class="l s115" style="left:811px;top:310px">数学</span><span class="l s115" style="left:811px;top:330px">英语</span><span class="l s115" style="left:811px;top:350px">语文</span>

<!-- chart text -->
<span class="c" style="left:844px;top:550px;font-size:14.500px;color:#6a6a6a">举例标题文字</span>
<span class="l s9 d" style="left:616.500px;top:572px">96</span><span class="l s9 d" style="left:616.500px;top:588px">94</span><span class="l s9 d" style="left:616.500px;top:603px">92</span><span class="l s9 d" style="left:616.500px;top:619px">90</span><span class="l s9 d" style="left:616.500px;top:635px">88</span><span class="l s9 d" style="left:616.500px;top:650px">86</span><span class="l s9 d" style="left:616.500px;top:666px">84</span>
<span class="c s10 d" style="left:831px;top:741.500px">2班</span><span class="c s10 d" style="left:958px;top:741.500px">3班</span>
<span class="l s9 k" style="left:1037px;top:632px">科目</span>
<span class="l s10 d" style="left:1047px;top:648px">数学</span><span class="l s10 d" style="left:1047px;top:666px">英语</span><span class="l s10 d" style="left:1047px;top:684px">语文</span>
<span class="c k" style="left:650px;top:634px">填充</span><span class="c k" style="left:689px;top:634px">轮廓</span>
<span class="l k" style="left:712px;top:621px">垂直 (值) 轴</span>

<!-- menu text -->
<span class="l" style="left:660px;top:687px">删除(<u>D</u>)</span>
<span class="l" style="left:660px;top:712px">重设以匹配样式(<u>A</u>)</span>
<span class="l k" style="left:634px;top:738px;font-weight:700;font-size:13px">A</span>
<span class="l" style="left:660px;top:739px">字体(<u>F</u>)...</span>
<span class="l" style="left:660px;top:766px">更改图表类型(<u>Y</u>)...</span>
<span class="l" style="left:660px;top:791px">选择数据(<u>E</u>)...</span>
<span class="l" style="left:660px;top:816px;color:#b5b5b5">三维旋转(<u>R</u>)...</span>
<span class="l" style="left:660px;top:843px">添加次要网格线(<u>N</u>)</span>
<span class="l" style="left:660px;top:868px">设置主要网格线格式(<u>M</u>)...</span>
<span class="l" style="left:660px;top:893px;color:#333">设置坐标轴格式(<u>F</u>)...</span>

<!-- pane text -->
<span class="l s21" style="left:1484px;top:266px;color:#217346">数据透视图字段</span>
<span class="l" style="left:1484px;top:299px">选择要添加到报表的字段:</span>
<span class="l" style="left:1485px;top:336px;color:#666">搜索</span>
<span class="l b k" style="left:1504px;top:375px">班级</span><span class="l b k" style="left:1504px;top:395px">科目</span><span class="l b k" style="left:1504px;top:416px">平均分</span>
<span class="l" style="left:1487px;top:657px">在以下区域间拖动字段:</span>
<span class="l" style="left:1509px;top:693px">筛选器</span>
<span class="l" style="left:1627px;top:693px">图例(系列)</span>
<span class="l" style="left:1509px;top:838px">轴(类别)</span>
<span class="l s14" style="left:1627px;top:838px">值</span>
<span class="l k" style="left:1612px;top:720px">科目</span>
<span class="l k" style="left:1494px;top:865px">班级</span>
<span class="l k" style="left:1612px;top:865px">求和项:平均分</span>

<!-- tabs text -->
<span class="c s13" style="left:134px;top:1002px;color:#217346">成绩表</span>
<span class="c s13" style="left:203px;top:1002px">员工信息</span>
<span class="c s13" style="left:273px;top:1002px">田字格</span>
<span class="c s13 k" style="left:361.500px;top:1002px">XXX公司销售额</span>
<span class="c s13 k" style="left:451.500px;top:1002px">课程表</span>
<span class="c s13" style="left:517px;top:1002px">Sheet5</span>
<span class="c" style="left:21px;top:1027.500px">就绪</span>
<span class="c" style="left:64px;top:1027.500px">数字</span>
<span class="c s13" style="left:1692px;top:1028px;color:#555">80%</span>

<!-- arrow and cursor -->
<svg class="o" viewBox="0 0 1728 1039" xmlns="http://www.w3.org/2000/svg">
<path d="M619 696l3.500-1.500 38 151.500 6.500-2.500-4 34.500-13-26.500 6-2z" fill="#e6101a" style="filter:drop-shadow(2px 1px 1.500px rgba(0,0,0,.45))"/>
<path d="M794.500 896v16l3.500-3.500 3 6.500 2.500-1-3-6.500h5z" fill="#fff" stroke="#000" stroke-width="1"/>
</svg>

<!-- watermark -->
<div style="position:absolute;left:1448px;top:929px;width:280px;height:104px;background:rgba(255,255,255,.55)"></div>
<div style="position:absolute;left:1289px;top:989px;width:159px;height:44px;background:rgba(255,255,255,.75)"></div>
<span class="l" style="left:1505px;top:993px;color:#c4c4c4">推迟布局更新</span>
<svg class="o" viewBox="0 0 1728 1039" xmlns="http://www.w3.org/2000/svg"><rect x="1486.500" y="987.500" width="12" height="12" fill="#fff" stroke="#ccc"/><rect x="1452.500" y="976.500" width="14" height="13" fill="#fff" stroke="#ccc"/><path d="M1456 981h7l-3.500 4z" fill="#bbb"/><rect x="1435.500" y="996.500" width="13" height="14" fill="#fff" stroke="#ccc"/><path d="M1441 999.500l4 4-4 4z" fill="#bbb"/><rect x="1545" y="929" width="174" height="104" rx="26" fill="#2f80fb" fill-opacity=".96"/></svg>
<span class="c b" style="left:1632px;top:980px;font-size:88px;color:#fff;letter-spacing:-7px;font-family:'Liberation Sans',sans-serif;opacity:.97">TAG</span>
<span class="c" style="left:1665px;top:1000px;font-size:22px;font-weight:700;color:rgba(30,100,210,.22);font-family:'Noto Sans CJK SC',sans-serif">极光下载站</span>
<span class="c" style="left:1648px;top:1025px;font-size:15px;color:rgba(30,100,210,.35)">www.xz7.com</span>
<span class="l" style="left:1302px;top:959px;font-size:45.500px;font-weight:700;color:#ff2a2e;font-family:'Noto Sans CJK SC',sans-serif">电脑技术网</span>
<span class="l b" style="left:1300px;top:1013px;font-size:33.500px;color:#2a7fe6;font-family:'Liberation Serif',serif">www.tagxp.com</span>
</body>
</html>
